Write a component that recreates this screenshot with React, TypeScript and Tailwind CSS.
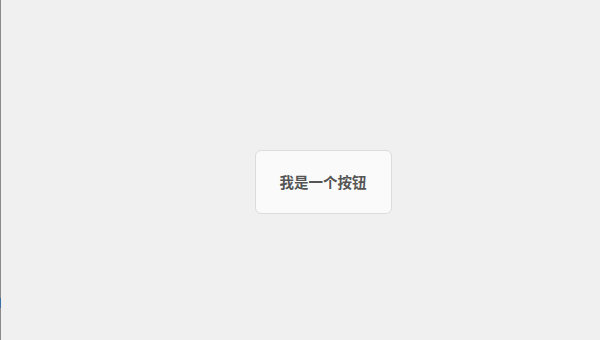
export default function App() {
  return (
    <div className="relative flex h-[340px] w-[600px] items-center justify-center bg-[#f0f0f0] pl-[46px] pt-[24px] font-['Noto_Sans_CJK_SC',sans-serif]">
      <div className="absolute left-0 top-0 h-full w-px bg-[#8a8a8a]" />
      <div className="absolute left-0 top-[298px] h-[10px] w-px bg-[#3a6ea5]" />
      <button className="flex h-[64px] w-[137px] items-center justify-center rounded-[6px] border border-[#dcdcdc] bg-[#fafafa] text-[14.5px] font-bold text-[#555555]">
        我是一个按钮
      </button>
    </div>
  );
}
